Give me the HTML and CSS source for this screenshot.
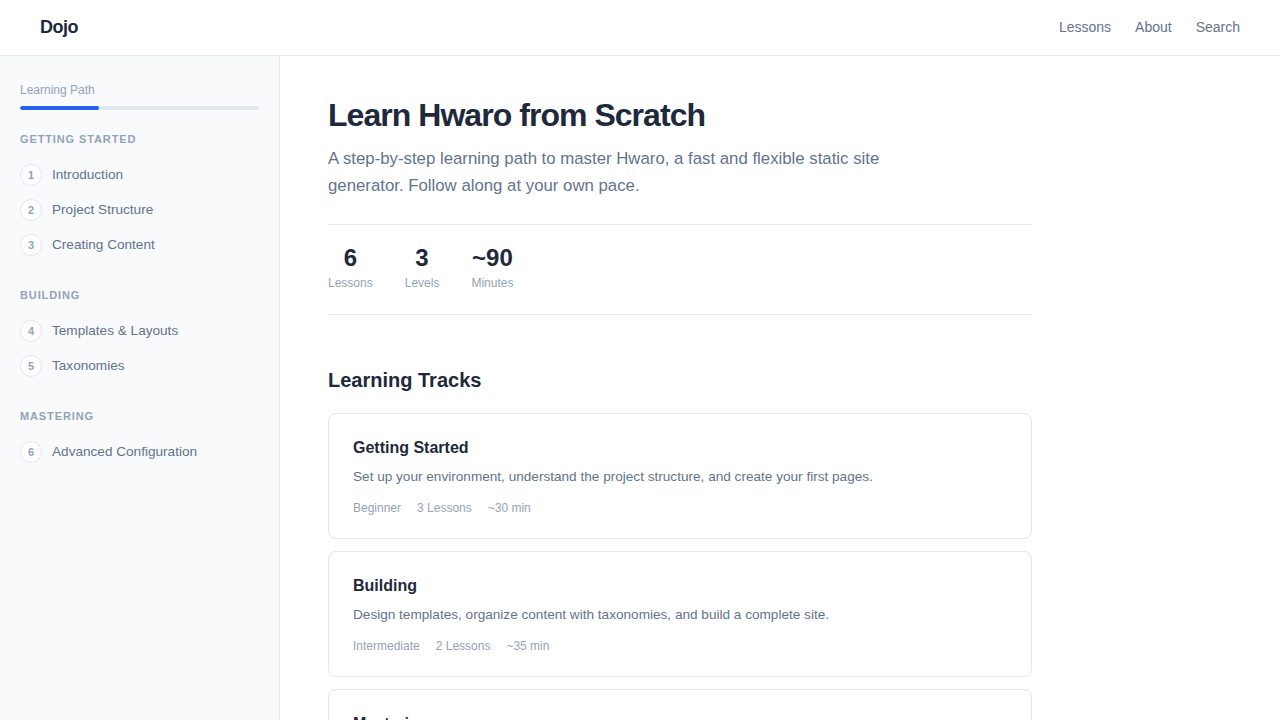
FILE: index.html
```html
<!DOCTYPE html>
<html lang="en">
<head>
<meta charset="utf-8">
<title>Dojo</title>
<link rel="stylesheet" href="styles.css">
</head>
<body>
<header class="topbar">
  <a class="brand" href="#">Dojo</a>
  <nav class="topnav">
    <a href="#">Lessons</a>
    <a href="#">About</a>
    <a href="#">Search</a>
  </nav>
</header>
<div class="layout">
  <aside class="sidebar">
    <div class="progress-label">Learning Path</div>
    <div class="progress"><div class="progress-fill" style="width:33%"></div></div>

    <div class="section-title">Getting Started</div>
    <ul class="lessons">
      <li><span class="num">1</span><span>Introduction</span></li>
      <li><span class="num">2</span><span>Project Structure</span></li>
      <li><span class="num">3</span><span>Creating Content</span></li>
    </ul>

    <div class="section-title">Building</div>
    <ul class="lessons">
      <li><span class="num">4</span><span>Templates &amp; Layouts</span></li>
      <li><span class="num">5</span><span>Taxonomies</span></li>
    </ul>

    <div class="section-title">Mastering</div>
    <ul class="lessons">
      <li><span class="num">6</span><span>Advanced Configuration</span></li>
    </ul>
  </aside>
  <main class="main">
    <div class="content">
      <h1 class="title">Learn Hwaro from Scratch</h1>
      <p class="lead">A step-by-step learning path to master Hwaro, a fast and flexible static site generator. Follow along at your own pace.</p>
      <div class="stats">
        <div class="stat"><div class="stat-num">6</div><div class="stat-label">Lessons</div></div>
        <div class="stat"><div class="stat-num">3</div><div class="stat-label">Levels</div></div>
        <div class="stat"><div class="stat-num">~90</div><div class="stat-label">Minutes</div></div>
      </div>
      <h2 class="tracks-title">Learning Tracks</h2>
      <div class="cards">
        <div class="card">
          <h3 class="card-title">Getting Started</h3>
          <p class="card-desc">Set up your environment, understand the project structure, and create your first pages.</p>
          <div class="meta"><span>Beginner</span><span>3 Lessons</span><span>~30 min</span></div>
        </div>
        <div class="card">
          <h3 class="card-title">Building</h3>
          <p class="card-desc">Design templates, organize content with taxonomies, and build a complete site.</p>
          <div class="meta"><span>Intermediate</span><span>2 Lessons</span><span>~35 min</span></div>
        </div>
        <div class="card">
          <h3 class="card-title">Mastering</h3>
          <p class="card-desc">Fine-tune your configuration and deploy with confidence.</p>
          <div class="meta"><span>Advanced</span><span>1 Lesson</span><span>~25 min</span></div>
        </div>
      </div>
    </div>
  </main>
</div>
</body>
</html>
```

FILE: styles.css
```css
* { box-sizing: border-box; }
html, body { margin: 0; padding: 0; }
body {
  font-family: "Liberation Sans", Arial, sans-serif;
  color: #1e293b;
  background: #ffffff;
  height: 720px;
  overflow: hidden;
}
a { text-decoration: none; color: inherit; }

.topbar {
  height: 56px;
  border-bottom: 1px solid #e2e8f0;
  display: flex;
  align-items: center;
  justify-content: space-between;
  padding: 0 40px 1px;
  background: #fff;
}
.brand {
  font-size: 18px;
  font-weight: 700;
  letter-spacing: -0.5px;
  color: #1e293b;
}
.topnav { display: flex; gap: 24px; }
.topnav a { font-size: 14px; color: #64748b; }

.layout { display: flex; height: 664px; }

.sidebar {
  width: 280px;
  flex: none;
  background: #f8fafc;
  border-right: 1px solid #e2e8f0;
  padding: 26px 20px;
}
.progress-label {
  font-size: 12px;
  line-height: 16px;
  color: #94a3b8;
  margin-bottom: 8px;
}
.progress {
  height: 4px;
  border-radius: 2px;
  background: #e2e8f0;
  overflow: hidden;
}
.progress-fill { height: 100%; background: #2563eb; border-radius: 2px; }

.section-title {
  font-size: 11px;
  line-height: 14px;
  font-weight: 700;
  letter-spacing: 0.08em;
  text-transform: uppercase;
  color: #94a3b8;
  margin-bottom: 11px;
}
.progress + .section-title { margin-top: 22px; }
.lessons { list-style: none; margin: 0; padding: 0; }
.lessons li {
  display: flex;
  align-items: center;
  gap: 10px;
  height: 35px;
  font-size: 13.6px;
  color: #64748b;
}
.lessons + .section-title { margin-top: 26px; }
.num {
  width: 22px;
  height: 22px;
  flex: none;
  border-radius: 50%;
  border: 1.5px solid #e2e8f0;
  background: #fff;
  display: flex;
  align-items: center;
  justify-content: center;
  font-size: 11px;
  font-weight: 700;
  color: #94a3b8;
}

.main { flex: 1; padding: 40px 48px; }
.content { width: 704px; }
.title {
  margin: 0 0 11px;
  font-size: 32px;
  line-height: 38px;
  font-weight: 700;
  letter-spacing: -0.03em;
  color: #1e293b;
}
.lead {
  margin: 0 0 25px;
  max-width: 600px;
  font-size: 16.8px;
  line-height: 27px;
  color: #64748b;
}
.stats {
  display: flex;
  gap: 32px;
  border-top: 1px solid #e2e8f0;
  border-bottom: 1px solid #e2e8f0;
  padding: 18px 0 22px;
}
.stat { text-align: center; }
.stat-num {
  font-size: 24px;
  line-height: 29px;
  font-weight: 700;
  color: #1e293b;
}
.stat-label {
  margin-top: 3px;
  font-size: 12px;
  line-height: 17px;
  color: #94a3b8;
}
.tracks-title {
  margin: 53px 0 21px;
  font-size: 20px;
  line-height: 24px;
  font-weight: 700;
  color: #1e293b;
}
.cards { display: flex; flex-direction: column; gap: 12.5px; }
.card {
  border: 1px solid #e2e8f0;
  border-radius: 8px;
  padding: 24px 24px 20.5px;
  background: #fff;
}
.card-title {
  margin: 0 0 9px;
  font-size: 16px;
  line-height: 20px;
  font-weight: 700;
  color: #1e293b;
}
.card-desc {
  margin: 0 0 12px;
  font-size: 13.6px;
  line-height: 20px;
  color: #64748b;
}
.meta {
  display: flex;
  gap: 16px;
  font-size: 12px;
  line-height: 18px;
  color: #94a3b8;
}
```
